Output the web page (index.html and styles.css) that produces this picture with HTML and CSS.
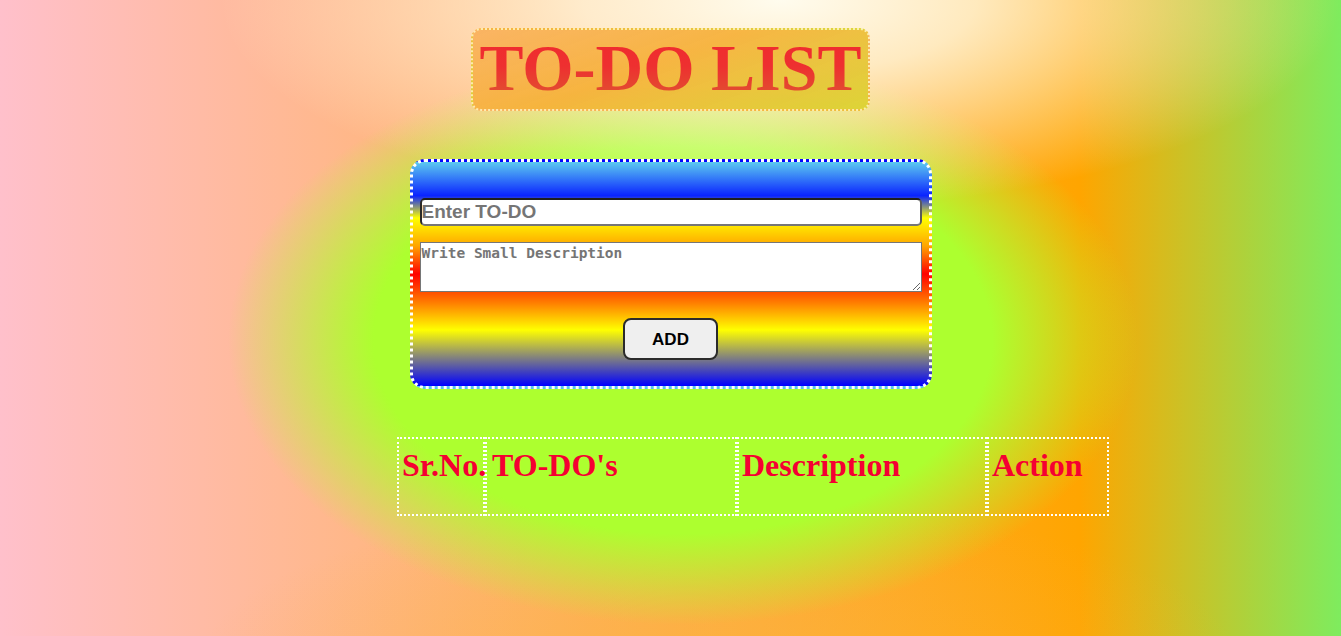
FILE: index.html
```html
<!DOCTYPE html>
<html lang="en">
<head>
<meta charset="utf-8">
<title>TO-DO LIST</title>
<link rel="stylesheet" href="styles.css">
</head>
<body>
<main class="page">
  <h1 class="title"><span class="title-text">TO-DO LIST</span></h1>
  <form class="todo-form">
    <input class="todo-input" type="text" placeholder="Enter TO-DO">
    <textarea class="todo-desc" placeholder="Write Small Description"></textarea>
    <button class="add-btn" type="button">ADD</button>
  </form>
  <table class="todo-table">
    <thead>
      <tr>
        <th class="col-sr">Sr.No.</th>
        <th class="col-todo">TO-DO's</th>
        <th class="col-desc">Description</th>
        <th class="col-action">Action</th>
      </tr>
    </thead>
  </table>
</main>
</body>
</html>
```

FILE: styles.css
```css
html {
  min-height: 100%;
  background:
    radial-gradient(ellipse 560px 210px at 780px 0px, rgba(255, 252, 238, 1) 0%, rgba(255, 250, 232, 0.8) 35%, rgba(255, 245, 225, 0) 100%),
    radial-gradient(ellipse 455px 285px at 683px 340px, #adff2f 0%, #adff2f 68%, rgba(173, 255, 47, 0) 100%),
    radial-gradient(ellipse 520px 160px at 720px 660px, rgba(250, 178, 60, 0.55) 0%, rgba(250, 178, 60, 0) 100%),
    linear-gradient(to right, #ffc0cb 0%, #ffa500 80.5%, #7eec5e 100%);
}

body {
  margin: 0;
  min-height: 100vh;
}

.page {
  display: flex;
  flex-direction: column;
  align-items: center;
  padding-top: 28px;
}

.title {
  margin: 0;
  box-sizing: border-box;
  width: 399px;
  height: 83px;
  display: flex;
  align-items: center;
  justify-content: center;
  border: 2px dotted rgba(255, 245, 190, 0.85);
  border-radius: 10px;
  background: linear-gradient(160deg, rgba(250, 178, 95, 0.95) 0%, rgba(246, 176, 55, 0.92) 45%, rgba(218, 210, 44, 0.9) 100%);
  font-family: "Liberation Serif", "Times New Roman", serif;
  font-weight: bold;
  font-size: 66px;
  line-height: 1;
}

.title-text {
  display: inline-block;
  padding-bottom: 4px;
  background: linear-gradient(to bottom, #f02a2e 0%, #ee3030 45%, #dc5a30 100%);
  -webkit-background-clip: text;
  background-clip: text;
  color: transparent;
}

.todo-form {
  margin-top: 48px;
  width: 502px;
  padding: 36px 7px 26px;
  border: 3px dotted #ffffff;
  border-radius: 15px;
  display: flex;
  flex-direction: column;
  background: linear-gradient(to bottom, #5ccaf0 0%, #0a24ff 15%, #ffff00 25%, #ffa500 37.5%, #ff0000 50%, #ff7a00 62.5%, #ffff00 75%, #808080 87.5%, #0000ff 100%);
}

.todo-input {
  box-sizing: border-box;
  width: 502px;
  height: 28px;
  margin: 0;
  padding: 0;
  border: 2px solid;
  border-color: #1e1e1e #5a5a5a #767676 #2a2a2a;
  border-radius: 5px;
  background: #ffffff;
  font-family: "Liberation Sans", Arial, sans-serif;
  font-weight: bold;
  font-size: 19px;
  color: #222;
}

.todo-input::placeholder {
  color: #757575;
}

.todo-desc {
  box-sizing: border-box;
  display: block;
  width: 502px;
  height: 50px;
  margin: 16px 0 0;
  padding: 2px 1px;
  border: 1px solid #767676;
  border-radius: 0;
  background: #ffffff;
  font-family: "DejaVu Sans Mono", "Liberation Mono", monospace;
  font-weight: bold;
  font-size: 14.5px;
}

.todo-desc::placeholder {
  color: #757575;
}

.add-btn {
  align-self: center;
  box-sizing: border-box;
  width: 95px;
  height: 42px;
  margin-top: 26px;
  padding: 2px 0 0;
  border: 2px solid #2b2b2b;
  border-radius: 8px;
  background: #efefef;
  font-family: "Liberation Sans", Arial, sans-serif;
  font-weight: bold;
  font-size: 17px;
  color: #000;
}

.todo-table {
  align-self: flex-start;
  margin: 48px 0 0 397px;
  width: 712px;
  table-layout: fixed;
  border-collapse: separate;
  border-spacing: 0;
}

.todo-table th {
  box-sizing: border-box;
  height: 79px;
  padding: 8px 1px 0 3px;
  border: 2px dotted #ffffff;
  vertical-align: top;
  text-align: left;
  white-space: nowrap;
  font-family: "Liberation Serif", "Times New Roman", serif;
  font-weight: bold;
  font-size: 32px;
  color: #f50032;
}

.col-sr { width: 88px; }
.col-todo { width: 252px; }
.col-desc { width: 250px; }
.col-action { width: 122px; }

.todo-table th.col-todo { padding-left: 5px; }
```
